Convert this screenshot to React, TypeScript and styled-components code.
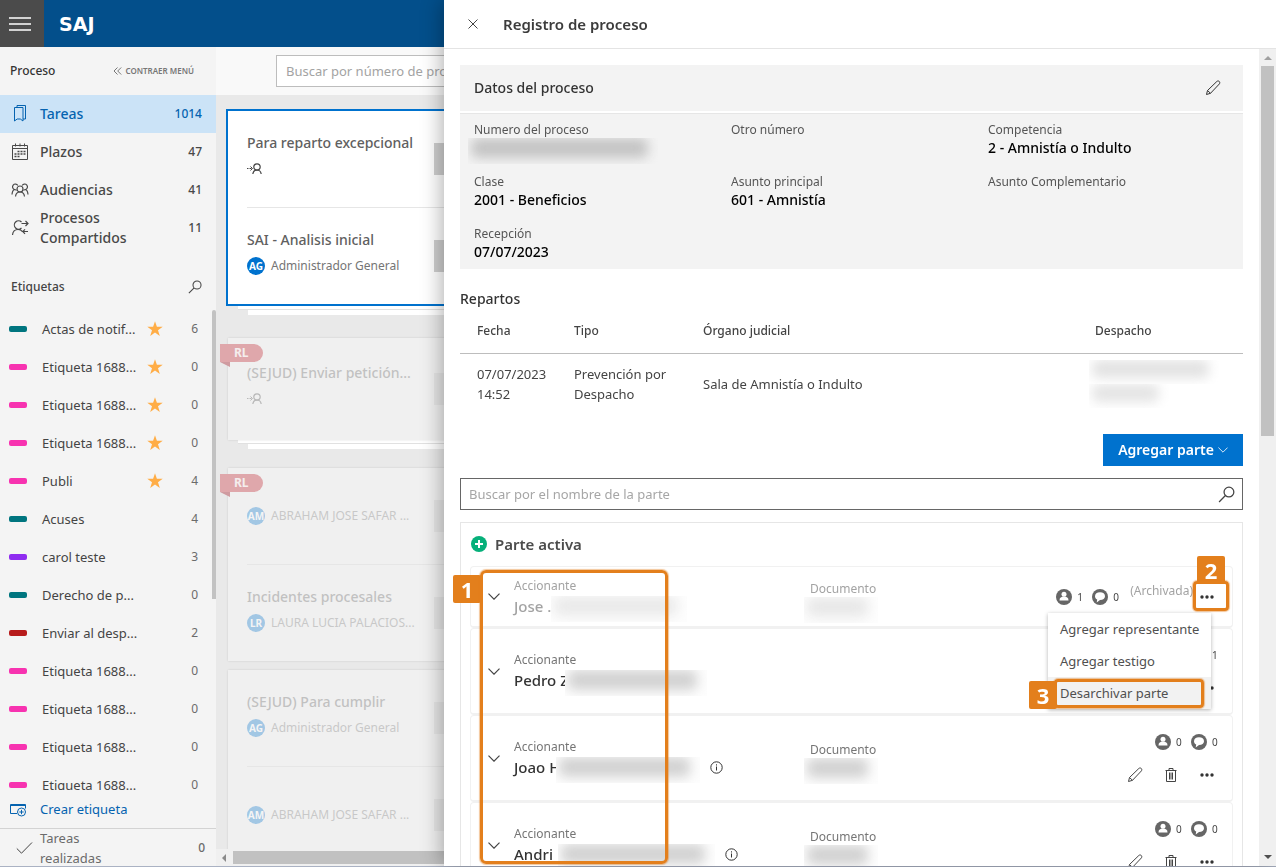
import React from "react";
import styled, { createGlobalStyle, css } from "styled-components";

const ORANGE = "#e37f1c";
const BLUE = "#0072ce";

const GlobalStyle = createGlobalStyle`
  *, *::before, *::after { box-sizing: border-box; }
  body { margin: 0; font-family: "Noto Sans", "Open Sans", sans-serif; font-size: 13px; line-height: 20px; color: #444; background: #e9e9e9; }
  button, input { font: inherit; color: inherit; }
  button { background: none; border: 0; padding: 0; cursor: pointer; text-align: left; }
  a { color: inherit; text-decoration: none; }
  ul { list-style: none; margin: 0; padding: 0; }
  h1, h2, h3, p, dl, dd { margin: 0; font: inherit; }
  svg { display: block; flex: none; }
`;

/* medium-weight text used by headings, menu entries and field values */
const strong = css`
  font-size: 14px;
  font-weight: 500;
`;

/* ---------- shell ---------- */

const Shell = styled.div`
  display: flex;
  flex-direction: column;
  height: 100vh;
  overflow: hidden;
  border-bottom: 1px solid #aab2c3;
`;

const TopBar = styled.header`
  display: flex;
  align-items: center;
  flex: none;
  height: 47px;
  background: #034f8b;
`;

const MenuToggle = styled.button`
  display: flex;
  align-items: center;
  justify-content: center;
  width: 44px;
  height: 47px;
  padding-right: 4px;
  background: #4b4b4b;
`;

const Brand = styled.a`
  margin-left: 15px;
  font-family: "DejaVu Sans", sans-serif;
  font-size: 19px;
  font-weight: 700;
  color: #fff;
`;

const Columns = styled.div`
  display: flex;
  flex: 1;
  min-height: 0;
`;

/* ---------- sidebar ---------- */

const Sidebar = styled.nav`
  display: flex;
  flex-direction: column;
  flex: none;
  width: 216px;
  background: #f4f4f4;
`;

const SideHeader = styled.div`
  display: flex;
  align-items: center;
  justify-content: space-between;
  height: 48px;
  padding: 0 22px 0 10px;
  font-size: 12px;
  font-weight: 500;
  color: #333;
`;

const CollapseButton = styled.button`
  display: flex;
  align-items: center;
  gap: 3px;
  font-size: 8px;
  font-weight: 600;
  color: #777;
`;

const NavItem = styled.a<{ $active?: boolean }>`
  display: flex;
  align-items: center;
  height: 38px;
  padding: 0 14px 0 10px;
  gap: 10px;
  ${strong}
  color: ${(p) => (p.$active ? "#0563b0" : "#484848")};
  background: ${(p) => (p.$active ? "#cbe3f7" : "transparent")};
  svg { width: 20px; height: 20px; }
`;

const NavLabel = styled.span`
  flex: 1;
  max-width: 110px;
  margin-right: auto;
`;

const Count = styled.span`
  font-size: 12px;
  font-weight: 500;
`;

const LabelsHeader = styled.div`
  display: flex;
  align-items: center;
  justify-content: space-between;
  height: 63px;
  padding: 16px 14px 0 11px;
  font-size: 12px;
  font-weight: 500;
`;

const LabelsArea = styled.div`
  display: flex;
  flex: 1;
  min-height: 0;
  overflow: hidden;
`;

const LabelList = styled.ul`
  flex: 1;
`;

const LabelRow = styled.a`
  display: flex;
  align-items: center;
  height: 38px;
  padding: 0 14px 0 9px;
`;

const Swatch = styled.i<{ $color: string }>`
  width: 18px;
  height: 6px;
  margin-right: 15px;
  border-radius: 2px;
  background: ${(p) => p.$color};
`;

const LabelName = styled.span`
  width: 105px;
  white-space: nowrap;
`;

const StarSlot = styled.span`
  width: 16px;
`;

const LabelCount = styled.span`
  margin-left: auto;
  font-size: 12px;
  color: #6b6b6b;
`;

const SideThumb = styled.div`
  width: 4px;
  height: 289px;
  border-radius: 2px 2px 0 0;
  background: #c2c2c2;
`;

const CreateLabel = styled.button`
  display: flex;
  align-items: center;
  gap: 13px;
  height: 38px;
  padding: 0 9px;
  color: #0563b0;
`;

const DoneTasks = styled.a`
  display: flex;
  align-items: center;
  height: 38px;
  padding: 0 14px 0 16px;
  border-top: 1px solid #d3d3d3;
  color: #6b6b6b;
  gap: 7px;
`;

const DoneLabel = styled.span`
  flex: 1;
  padding-right: 90px;
`;

/* ---------- board ---------- */

const Board = styled.main`
  display: flex;
  flex-direction: column;
  flex: 1;
  min-width: 0;
  background: #e9e9e9;
`;

const BoardToolbar = styled.div`
  flex: none;
  height: 48px;
  padding: 8px 0 0 60px;
  background: #f9f9f9;
`;

const ProcessSearch = styled.input`
  width: 320px;
  height: 32px;
  padding: 0 9px;
  border: 1px solid #bdbdbd;
  background: #fff;
  outline: 0;
  &::placeholder { color: #a3a3a3; opacity: 1; }
`;

const CardColumn = styled.div`
  flex: 1;
  min-height: 0;
  overflow: hidden;
  width: 420px;
  padding: 14px 0 0 10px;
`;

const CardBox = styled.article<{ $selected?: boolean }>`
  position: relative;
  ${(p) =>
    p.$selected
      ? css`
          border: 2px solid ${BLUE};
          padding: 0 19px;
          background: #fff;
        `
      : css`
          margin-left: 2px;
          padding: 0 19px;
          background: #f0f0f0;
          box-shadow: 0 0 2px rgba(0, 0, 0, 0.12);
        `}
`;

const StackUnder = styled.div`
  height: 4px;
  margin-left: 12px;
  background: #fff;
  border-bottom: 1px solid #e1e1e1;
`;

const StackUnderLast = styled.div`
  height: 5px;
  margin-left: 22px;
  background: #fff;
`;

const Spacer = styled.div<{ $h: number }>`
  height: ${(p) => p.$h}px;
`;

const Task = styled.div<{ $tall?: boolean; $muted?: boolean }>`
  display: flex;
  align-items: center;
  height: ${(p) => (p.$tall ? 102 : 96)}px;
  & + & { border-top: 1px solid #e6e6e6; height: 97px; }
  > * { opacity: ${(p) => (p.$muted ? 0.32 : 1)}; }
`;

const TaskText = styled.div<{ $titled: boolean }>`
  display: flex;
  flex-direction: column;
  gap: 6px;
  width: 187px;
  padding-bottom: ${(p) => (p.$titled ? 6 : 0)}px;
  white-space: nowrap;
`;

const TaskTitle = styled.h3`
  ${strong}
  color: #606060;
`;

const Assignee = styled.div`
  display: flex;
  align-items: center;
  gap: 6px;
  height: 20px;
  font-size: 12px;
  color: #757575;
`;

const Avatar = styled.span`
  width: 18px;
  height: 18px;
  border-radius: 9px;
  background: ${BLUE};
  color: #fff;
  font-size: 10px;
  font-weight: 700;
  line-height: 18px;
  text-align: center;
`;

const TaskCount = styled.div`
  width: 60px;
  height: 32px;
  background: #cfcfcf;
`;

const Ribbon = styled.span`
  position: absolute;
  top: 6px;
  left: -8px;
  width: 43px;
  height: 18px;
  padding-left: 14px;
  border-radius: 0 9px 9px 0;
  background: #dfa7ab;
  color: #f4eeee;
  font-size: 12px;
  font-weight: 700;
  line-height: 18px;
  &::after {
    content: "";
    position: absolute;
    top: 18px;
    left: 0;
    border-top: 5px solid #cf9ba0;
    border-left: 10px solid transparent;
  }
`;

const HScroll = styled.div`
  display: flex;
  align-items: center;
  flex: none;
  height: 17px;
  padding-left: 4px;
  background: #f0f0f0;
`;

const HThumb = styled.div`
  flex: 1;
  height: 13px;
  margin-left: 5px;
  background: #c1c1c1;
`;

/* ---------- drawer ---------- */

const Drawer = styled.aside`
  position: fixed;
  top: 0;
  right: 0;
  bottom: 1px;
  display: flex;
  flex-direction: column;
  width: calc(100% - 444px);
  background: #fff;
  box-shadow: -2px 0 20px rgba(0, 0, 0, 0.32);
`;

const DrawerHeader = styled.header`
  display: flex;
  align-items: center;
  flex: none;
  gap: 24px;
  height: 49px;
  padding: 0 23px;
  border-bottom: 1px solid #e4e4e4;
`;

const DrawerTitle = styled.h1`
  font-size: 15px;
  font-weight: 600;
  color: #3c3c3c;
`;

const DrawerMain = styled.div`
  display: flex;
  flex: 1;
  min-height: 0;
`;

const DrawerBody = styled.div`
  flex: 1;
  min-width: 0;
  overflow: hidden;
  padding: 16px;
`;

const VScroll = styled.div`
  display: flex;
  flex-direction: column;
  align-items: center;
  width: 17px;
  padding: 5px 0;
  background: #f0f0f0;
`;

const VThumb = styled.div`
  width: 13px;
  height: 370px;
  margin: 4px 0 auto;
  background: #c1c1c1;
`;

const PanelHead = styled.div`
  display: flex;
  align-items: center;
  justify-content: space-between;
  height: 46px;
  padding: 0 22px 0 14px;
  background: #f3f3f3;
  ${strong}
  color: #333;
`;

const Fields = styled.dl`
  display: grid;
  grid-template-columns: 257px 257px 1fr;
  row-gap: 16px;
  margin-top: 2px;
  padding: 8px 14px 7px;
  border-top: 1px solid #e6e6e6;
  background: #f3f3f3;
`;

const FieldLabel = styled.dt`
  height: 16px;
  font-size: 12px;
  line-height: 16px;
  color: #555;
`;

const FieldValue = styled.dd`
  height: 20px;
  ${strong}
  color: #000;
`;

const SectionTitle = styled.h2`
  margin-top: 20px;
  ${strong}
  color: #333;
`;

const Table = styled.table`
  width: 100%;
  table-layout: fixed;
  border-collapse: collapse;
  text-align: left;
  th { height: 44px; padding: 0 0 0 17px; font-size: 12px; font-weight: 500; border-bottom: 1px solid #bdbdbd; }
  td { height: 61px; padding: 0 0 0 17px; }
`;

const Col = styled.col<{ $w?: number }>`
  width: ${(p) => (p.$w ? `${p.$w}px` : "auto")};
`;

const Redacted = styled.span<{ $w: number; $h?: number; $tone?: string; $bg?: string; $overlap?: number }>`
  position: relative;
  display: block;
  flex: none;
  width: ${(p) => p.$w}px;
  height: ${(p) => p.$h ?? 26}px;
  margin-left: ${(p) => -(p.$overlap ?? 0)}px;
  background: ${(p) => p.$bg ?? "#fdfdfd"};
  overflow: hidden;
  &::before {
    content: "";
    position: absolute;
    inset: 0 10px 6px 3px;
    border-radius: 6px;
    background: ${(p) => p.$tone ?? "#d2d2d2"};
    filter: blur(6px);
  }
`;

const Actions = styled.div`
  display: flex;
  justify-content: flex-end;
  margin: 20px 0 12px;
`;

const PrimaryButton = styled.button`
  display: flex;
  align-items: center;
  justify-content: center;
  gap: 4px;
  width: 140px;
  height: 32px;
  background: ${BLUE};
  color: #fff;
  font-size: 14px;
  font-weight: 600;
`;

const PartySearch = styled.label`
  display: flex;
  align-items: center;
  height: 32px;
  padding: 0 7px 0 8px;
  border: 1px solid #666;
  input { flex: 1; min-width: 0; padding: 0; border: 0; outline: 0; background: transparent; }
  input::placeholder { color: #a6a6a6; opacity: 1; }
`;

const PartyGroup = styled.section`
  position: relative;
  margin-top: 12px;
  padding: 0 9px;
  border: 1px solid #e6e6e6;
`;

const GroupTitle = styled.h2`
  display: flex;
  align-items: center;
  gap: 7px;
  height: 43px;
  padding-bottom: 2px;
  font-size: 15px;
  font-weight: 600;
  color: #4c4c4c;
`;

const PartyRow = styled.div<{ $short?: boolean }>`
  position: relative;
  display: flex;
  align-items: center;
  height: ${(p) => (p.$short ? 62 : 87)}px;
  padding: 0 5px 0 17px;
  border: 1px solid #f1f1f1;
  border-bottom-width: 2px;
  border-radius: 4px;
`;

const PartyName = styled.div<{ $muted?: boolean }>`
  flex: none;
  width: 296px;
  margin-left: 14px;
  padding-bottom: 2px;
  color: ${(p) => (p.$muted ? "#a3a3a3" : "#333")};
`;

const Role = styled.div<{ $muted?: boolean }>`
  font-size: 12px;
  color: ${(p) => (p.$muted ? "#a3a3a3" : "#757575")};
`;

const NameLine = styled.div`
  display: flex;
  height: 20px;
  font-size: 15px;
  font-weight: 500;
  white-space: nowrap;
  > svg { margin: 4px 0 0 10px; }
`;

const Document = styled.div<{ $muted?: boolean }>`
  width: 80px;
  height: 40px;
  padding-top: 4px;
  white-space: nowrap;
  font-size: 12px;
  line-height: 16px;
  color: ${(p) => (p.$muted ? "#a3a3a3" : "#757575")};
`;

const RowTools = styled.div`
  display: flex;
  flex-direction: column;
  gap: 13px;
  margin-left: auto;
`;

const Counters = styled.div<{ $inset?: boolean }>`
  display: flex;
  align-items: center;
  justify-content: flex-end;
  height: 20px;
  padding-right: ${(p) => (p.$inset ? 12 : 0)}px;
  font-size: 10px;
`;

const Counter = styled.span`
  display: flex;
  align-items: center;
  gap: 5px;
  width: 36px;
`;

const Buttons = styled.div`
  display: flex;
  align-items: center;
  justify-content: flex-end;
  gap: 20px;
  height: 20px;
  padding-right: 12px;
`;

const IconButton = styled.button`
  position: relative;
  display: flex;
  align-items: center;
  justify-content: center;
  width: 16px;
  height: 20px;
`;

const Archived = styled.span`
  padding: 0 6px 12px 2px;
  font-size: 12px;
  color: #a3a3a3;
`;

const Menu = styled.div`
  position: absolute;
  z-index: 2;
  top: 46px;
  right: 21px;
  width: 163px;
  background: #fff;
  box-shadow: 0 1px 4px rgba(0, 0, 0, 0.3);
`;

const MenuItem = styled.button<{ $hover?: boolean }>`
  position: relative;
  display: block;
  width: 100%;
  height: 32px;
  padding-left: 12px;
  color: #505050;
  white-space: nowrap;
  background: ${(p) => (p.$hover ? "#f2f2f2" : "#fff")};
`;

/* ---------- callouts ---------- */

const frame = css`
  position: absolute;
  border: 3px solid ${ORANGE};
  border-radius: 4px;
  box-shadow: 0 0 1px 1px rgba(227, 127, 28, 0.45);
  pointer-events: none;
`;

const NamesFrame = styled.div`
  ${frame}
  z-index: 3;
  top: 47px;
  left: 19px;
  width: 188px;
  height: 294px;
  border-radius: 6px;
`;

const MoreFrame = styled.span`
  ${frame}
  z-index: 3;
  inset: -6px -14px -4px -6px;
`;

const MenuFrame = styled.span`
  ${frame}
  inset: 2px 7px 1px 6px;
`;

const Badge = styled.span<{ $x: number; $y: number }>`
  position: absolute;
  top: ${(p) => p.$y}px;
  left: ${(p) => p.$x}px;
  width: 28px;
  height: 28px;
  border-radius: 2px;
  background: ${ORANGE};
  color: #fff;
  font-size: 22px;
  font-weight: 700;
  line-height: 28px;
  text-align: center;
`;

/* ---------- icons ---------- */

type IconProps = { children: React.ReactNode; w?: number; h?: number; box?: string; sw?: number };
const Icon = ({ children, w = 16, h = 16, box = "0 0 16 16", sw = 1 }: IconProps) => (
  <svg width={w} height={h} viewBox={box} fill="none" stroke="currentColor" strokeWidth={sw} aria-hidden="true">
    {children}
  </svg>
);

const Hamburger = () => (
  <Icon w={22} h={14} box="0 0 22 14">
    <path d="M0 1h22M0 7h22M0 13h22" stroke="#fff" strokeWidth="1.3" />
  </Icon>
);
const Chevrons = () => (
  <Icon w={9} h={8} box="0 0 9 8">
    <path d="M4.5.5 1 4l3.5 3.5M8.200.5 4.700 4l3.500 3.500" />
  </Icon>
);
const Bookmarks = () => (
  <Icon box="0 0 20 20">
    <path d="M4.500 3.500h8.500v13.500l-2.700-2h-3.100l-2.700 2zM7 3.500v-2h8.500v13.500h-2.500" />
  </Icon>
);
const CalendarIcon = () => (
  <Icon box="0 0 20 20">
    <path d="M2.500 3.500h15v14h-15zM2.500 6.500h15M5.500 1.500v3M10 1.500v3M14.500 1.500v3" />
    <path d="M7.500 9.500h8M4.500 12h11M4.500 14.500h6" strokeWidth="1.600" strokeDasharray="2 1" />
  </Icon>
);
const People = () => (
  <Icon box="0 0 20 20" sw={1.2}>
    <circle cx="10" cy="9" r="3" />
    <path d="M5.500 16.500c.3-2.800 2-4.500 4.500-4.500s4.200 1.700 4.500 4.500M7.800 5.500A2.800 2.800 0 1 0 4.500 9.500C3 10 2.200 12 2 14.500M4.500 9.500c1 0 1.500.3 2 .8M12.200 5.500A2.800 2.800 0 1 1 15.500 9.500c1.500.5 2.300 2.500 2.500 5M15.500 9.500c-1 0-1.500.3-2 .8" />
  </Icon>
);
const SharedPerson = () => (
  <Icon box="0 0 20 20" sw={1.2}>
    <path d="M11.500 4A4.200 4.200 0 1 0 11.500 10M2.500 17c.3-3.500 2.200-5.500 5.500-5.500 2 0 3.500.8 4.500 2.200M11.500 5.500H18M15.500 3 18 5.500 15.500 8M18 13.500h-5M15 11.300 12.800 13.500l2.200 2.300" />
  </Icon>
);
const SearchIcon = ({ size = 16 }: { size?: number }) => (
  <Icon w={size} h={size} sw={1.2}>
    <circle cx="10.300" cy="5.700" r="4.600" />
    <path d="M7 9 1 15" />
  </Icon>
);
const Star = () => (
  <svg width="16" height="16" viewBox="0 0 16 16" fill="#ffad46" aria-hidden="true">
    <path d="M8 .3l1.900 5.500h5.800l-4.700 3.500 1.800 5.700L8 11.500l-4.800 3.500L5 9.300.3 5.800h5.800z" />
  </svg>
);
const TagAdd = () => (
  <Icon w={18} h={16} box="0 0 18 16">
    <path d="M8 12.500H1.500v-9h15v4M1.500 4.500h15" />
    <circle cx="12.500" cy="11" r="4" />
    <path d="M12.500 8.800v4.400M10.300 11h4.400" />
  </Icon>
);
const CheckIcon = () => (
  <Icon w={17} h={14} box="0 0 17 14">
    <path d="M.8 7.500l4.700 4.700L16 1.500" stroke="#444" />
  </Icon>
);
const Forward = () => (
  <Icon w={16} h={12} box="0 0 16 12">
    <path d="M0 5.500h1.500M2.500 5.500h2M3.500 3.500l2 2-2 2" stroke="#444" />
    <circle cx="10" cy="4" r="3.200" stroke="#444" strokeWidth="1.200" />
    <path d="M5.800 11c.4-2.500 1.900-4 4.200-4s3.800 1.500 4.200 4" stroke="#444" strokeWidth="1.200" />
  </Icon>
);
const CloseIcon = () => (
  <Icon w={12} h={12} box="0 0 12 12">
    <path d="M1.500 1.500l9 9M10.500 1.500l-9 9" stroke="#444" />
  </Icon>
);
const Pencil = () => (
  <Icon>
    <path d="M1.500 14.500l1-4L11.800 1.500c.8-.8 1.900-.6 2.500 0s.7 1.700 0 2.500L5.500 13.300zM2.500 10.500l3 2.800" />
  </Icon>
);
const Trash = () => (
  <Icon>
    <path d="M2.500 3.500h11M6 3V1.500h4V3M3.500 3.500v11h9v-11M6.500 5.500v7M8 5.500v7M9.500 5.500v7" />
  </Icon>
);
const Dots = () => (
  <svg width="14" height="4" viewBox="0 0 14 4" fill="#333" aria-hidden="true">
    <circle cx="2" cy="2" r="1.700" />
    <circle cx="7" cy="2" r="1.700" />
    <circle cx="12" cy="2" r="1.700" />
  </svg>
);
const ChevronDown = ({ w = 12, sw = 1.2 }: { w?: number; sw?: number }) => (
  <Icon w={w} h={(w * 7) / 12} box="0 0 12 7" sw={sw}>
    <path d="M.5.7 6 6.200 11.500.7" />
  </Icon>
);
const PlusCircle = () => (
  <svg width="18" height="16" viewBox="0 0 18 16" aria-hidden="true">
    <circle cx="9" cy="8" r="8" fill="#06b07a" />
    <path d="M9 4v8M5 8h8" stroke="#fff" strokeWidth="2" />
  </svg>
);
const PersonBadge = () => (
  <svg width="16" height="16" viewBox="0 0 16 16" fill="#fff" aria-hidden="true">
    <circle cx="8" cy="8" r="8" fill="#666" />
    <circle cx="8" cy="5.200" r="2.500" />
    <path d="M3.500 11.500c0-3 1.800-4 4.500-4s4.500 1 4.500 4z" />
  </svg>
);
const CommentBadge = () => (
  <svg width="16" height="16" viewBox="0 0 16 16" fill="#fff" aria-hidden="true">
    <circle cx="8" cy="8" r="8" fill="#666" />
    <path d="M8 3.300c3 0 5 1.600 5 3.900s-2 3.900-5 3.900l-3.300 2.400.5-2.900C3.800 9.900 3 8.700 3 7.200c0-2.300 2-3.900 5-3.900z" />
  </svg>
);
const Info = () => (
  <Icon w={13} h={13} box="0 0 13 13">
    <circle cx="6.500" cy="6.500" r="5.700" />
    <path d="M6.500 5.500v4M6.500 3.300v1.200" />
  </Icon>
);
const Arrow = ({ d, color }: { d: string; color: string }) => (
  <svg width="8" height="8" viewBox="0 0 8 8" fill={color} aria-hidden="true">
    <path d={d} />
  </svg>
);

/* ---------- data ---------- */

const TEAL = "#00757f";
const PINK = "#f733b0";
const labels = [
  { name: "Actas de notif...", count: 6, color: TEAL, star: true },
  { name: "Etiqueta 1688...", count: 0, color: PINK, star: true },
  { name: "Etiqueta 1688...", count: 0, color: PINK, star: true },
  { name: "Etiqueta 1688...", count: 0, color: PINK, star: true },
  { name: "Publi", count: 4, color: PINK, star: true },
  { name: "Acuses", count: 4, color: TEAL },
  { name: "carol teste", count: 3, color: "#8f2cf0" },
  { name: "Derecho de p...", count: 0, color: TEAL },
  { name: "Enviar al desp...", count: 2, color: "#b71c1c" },
  { name: "Etiqueta 1688...", count: 0, color: PINK },
  { name: "Etiqueta 1688...", count: 0, color: PINK },
  { name: "Etiqueta 1688...", count: 0, color: PINK },
  { name: "Etiqueta 1688...", count: 0, color: PINK },
];

const nav = [
  { name: "Tareas", count: 1014, icon: <Bookmarks />, active: true },
  { name: "Plazos", count: 47, icon: <CalendarIcon /> },
  { name: "Audiencias", count: 41, icon: <People /> },
  { name: "Procesos Compartidos", count: 11, icon: <SharedPerson /> },
];

const fields: { label: string; value?: React.ReactNode }[] = [
  { label: "Numero del proceso", value: <Redacted $w={190} $tone="#c4c4c4" $bg="#f3f3f3" $overlap={6} /> },
  { label: "Otro número" },
  { label: "Competencia", value: "2 - Amnistía o Indulto" },
  { label: "Clase", value: "2001 - Beneficios" },
  { label: "Asunto principal", value: "601 - Amnistía" },
  { label: "Asunto Complementario" },
  { label: "Recepción", value: "07/07/2023" },
];

type Party = { name: string; hidden: number; overlap: number; info?: boolean; doc?: boolean; comments: number };
const parties: Party[] = [
  { name: "Pedro Z", hidden: 142, overlap: 4, comments: 1 },
  { name: "Joao H", hidden: 144, overlap: 4, info: true, doc: true, comments: 0 },
  { name: "Andri", hidden: 157, overlap: -5, info: true, doc: true, comments: 0 },
];

/* ---------- pieces ---------- */

type TaskProps = { title?: string; who?: string; initials?: string; muted?: boolean; tall?: boolean };
const TaskItem = ({ title, who, initials, muted, tall }: TaskProps) => (
  <Task $muted={muted} $tall={tall}>
    <TaskText $titled={!!title}>
      {title && <TaskTitle>{title}</TaskTitle>}
      <Assignee>{who ? (<><Avatar>{initials}</Avatar>{who}</>) : <Forward />}</Assignee>
    </TaskText>
    <TaskCount />
  </Task>
);

const Counts = ({ people, comments }: { people: number; comments: number }) => (
  <>
    <Counter><PersonBadge />{people}</Counter>
    <Counter><CommentBadge />{comments}</Counter>
  </>
);

export default function App() {
  return (
    <Shell>
      <GlobalStyle />
      <TopBar>
        <MenuToggle aria-label="Menú"><Hamburger /></MenuToggle>
        <Brand href="#">SAJ</Brand>
      </TopBar>
      <Columns>
        <Sidebar>
          <SideHeader>
            Proceso
            <CollapseButton><Chevrons />CONTRAER MENÚ</CollapseButton>
          </SideHeader>
          {nav.map((n) => (
            <NavItem key={n.name} href="#" $active={n.active}>
              {n.icon}
              <NavLabel>{n.name}</NavLabel>
              <Count>{n.count}</Count>
            </NavItem>
          ))}
          <LabelsHeader>
            Etiquetas
            <button aria-label="Buscar etiqueta"><SearchIcon size={14} /></button>
          </LabelsHeader>
          <LabelsArea>
            <LabelList>
              {labels.map((l, i) => (
                <li key={i}>
                  <LabelRow href="#">
                    <Swatch $color={l.color} />
                    <LabelName>{l.name}</LabelName>
                    <StarSlot>{l.star && <Star />}</StarSlot>
                    <LabelCount>{l.count}</LabelCount>
                  </LabelRow>
                </li>
              ))}
            </LabelList>
            <SideThumb />
          </LabelsArea>
          <CreateLabel><TagAdd />Crear etiqueta</CreateLabel>
          <DoneTasks href="#">
            <CheckIcon />
            <DoneLabel>Tareas realizadas</DoneLabel>
            <Count>0</Count>
          </DoneTasks>
        </Sidebar>

        <Board>
          <BoardToolbar>
            <ProcessSearch aria-label="Buscar proceso" placeholder="Buscar por número de proceso" />
          </BoardToolbar>
          <CardColumn>
            <CardBox $selected>
              <TaskItem title="Para reparto excepcional" />
              <TaskItem title="SAI - Analisis inicial" who="Administrador General" initials="AG" />
            </CardBox>
            <StackUnder />
            <StackUnderLast />
            <Spacer $h={23} />
            <CardBox>
              <Ribbon>RL</Ribbon>
              <TaskItem title="(SEJUD) Enviar petición..." muted tall />
            </CardBox>
            <StackUnder />
            <StackUnderLast />
            <Spacer $h={19} />
            <CardBox>
              <Ribbon>RL</Ribbon>
              <TaskItem who="ABRAHAM JOSE SAFAR ..." initials="AM" muted />
              <TaskItem title="Incidentes procesales" who="LAURA LUCIA PALACIOS..." initials="LR" muted />
            </CardBox>
            <Spacer $h={9} />
            <CardBox>
              <TaskItem title="(SEJUD) Para cumplir" who="Administrador General" initials="AG" muted />
              <TaskItem who="ABRAHAM JOSE SAFAR ..." initials="AM" muted />
            </CardBox>
          </CardColumn>
          <HScroll>
            <Arrow d="M6 0v8L2 4z" color="#8a8a8a" />
            <HThumb />
          </HScroll>
        </Board>
      </Columns>

      <Drawer aria-label="Registro de proceso">
        <DrawerHeader>
          <button aria-label="Cerrar"><CloseIcon /></button>
          <DrawerTitle>Registro de proceso</DrawerTitle>
        </DrawerHeader>
        <DrawerMain>
          <DrawerBody>
            <PanelHead>
              Datos del proceso
              <IconButton aria-label="Editar datos"><Pencil /></IconButton>
            </PanelHead>
            <Fields>
              {fields.map((f) => (
                <div key={f.label}>
                  <FieldLabel>{f.label}</FieldLabel>
                  <FieldValue>{f.value}</FieldValue>
                </div>
              ))}
            </Fields>

            <SectionTitle>Repartos</SectionTitle>
            <Table>
              <colgroup>
                <Col $w={97} />
                <Col $w={129} />
                <Col />
                <Col $w={165} />
              </colgroup>
              <thead>
                <tr>
                  <th>Fecha</th>
                  <th>Tipo</th>
                  <th>Órgano judicial</th>
                  <th>Despacho</th>
                </tr>
              </thead>
              <tbody>
                <tr>
                  <td>07/07/2023 14:52</td>
                  <td>Prevención por Despacho</td>
                  <td>Sala de Amnistía o Indulto</td>
                  <td>
                    <Redacted $w={130} $h={24} $tone="#e2e2e2" $bg="#fff" $overlap={6} />
                    <Redacted $w={80} $h={24} $tone="#e4e4e4" $bg="#fff" $overlap={6} />
                  </td>
                </tr>
              </tbody>
            </Table>

            <Actions>
              <PrimaryButton>Agregar parte <ChevronDown w={10} sw={1} /></PrimaryButton>
            </Actions>
            <PartySearch>
              <input aria-label="Buscar parte" placeholder="Buscar por el nombre de la parte" />
              <SearchIcon size={17} />
            </PartySearch>

            <PartyGroup>
              <GroupTitle><PlusCircle />Parte activa</GroupTitle>
              <PartyRow $short>
                <button aria-label="Expandir"><ChevronDown /></button>
                <PartyName $muted>
                  <Role $muted>Accionante</Role>
                  <NameLine>Jose .<Redacted $w={136} $tone="#eaeaea" /></NameLine>
                </PartyName>
                <Document $muted>
                  Documento
                  <Redacted $w={74} $tone="#e8e8e8" $overlap={6} />
                </Document>
                <RowTools>
                  <Counters $inset>
                    <Counts people={1} comments={0} />
                    <Archived>(Archivada)</Archived>
                    <IconButton aria-label="Más opciones">
                      <Dots />
                      <MoreFrame />
                      <Badge $x={-2} $y={-31}>2</Badge>
                    </IconButton>
                  </Counters>
                </RowTools>
                <Menu role="menu">
                  <MenuItem role="menuitem">Agregar representante</MenuItem>
                  <MenuItem role="menuitem">Agregar testigo</MenuItem>
                  <MenuItem role="menuitem" $hover>
                    Desarchivar parte
                    <MenuFrame />
                    <Badge $x={-19} $y={4}>3</Badge>
                  </MenuItem>
                </Menu>
              </PartyRow>
              {parties.map((p) => (
                <PartyRow key={p.name}>
                  <button aria-label="Expandir"><ChevronDown /></button>
                  <PartyName>
                    <Role>Accionante</Role>
                    <NameLine>
                      {p.name}
                      <Redacted $w={p.hidden} $overlap={p.overlap} />
                      {p.info && <Info />}
                    </NameLine>
                  </PartyName>
                  {p.doc && (
                    <Document>
                      Documento
                      <Redacted $w={74} $overlap={6} />
                    </Document>
                  )}
                  <RowTools>
                    <Counters><Counts people={0} comments={p.comments} /></Counters>
                    <Buttons>
                      <IconButton aria-label="Editar"><Pencil /></IconButton>
                      <IconButton aria-label="Eliminar"><Trash /></IconButton>
                      <IconButton aria-label="Más opciones"><Dots /></IconButton>
                    </Buttons>
                  </RowTools>
                </PartyRow>
              ))}
              <NamesFrame />
              <Badge $x={-8} $y={52}>1</Badge>
            </PartyGroup>
          </DrawerBody>
          <VScroll>
            <Arrow d="M0 6h8L4 2z" color="#a0a0a0" />
            <VThumb />
            <Arrow d="M0 2h8L4 6z" color="#505050" />
          </VScroll>
        </DrawerMain>
      </Drawer>
    </Shell>
  );
}
